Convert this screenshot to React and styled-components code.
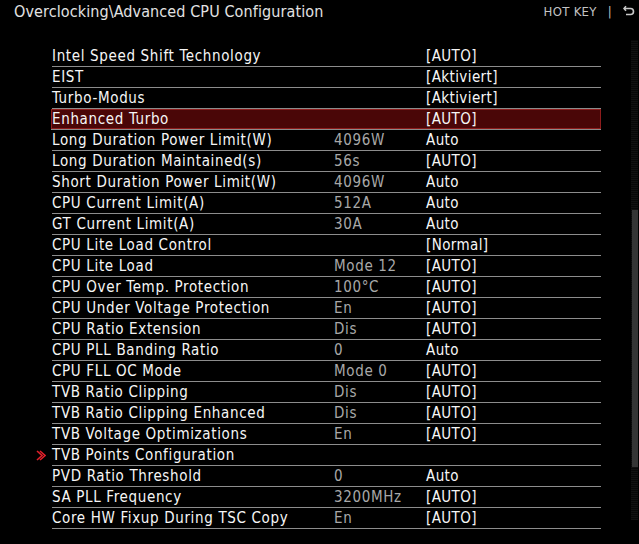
import React from 'react';
import styled, { createGlobalStyle } from 'styled-components';

const GlobalStyle = createGlobalStyle`
  html, body {
    margin: 0;
    padding: 0;
    background: #000;
  }
  body {
    font-family: "DejaVu Sans Condensed", "DejaVu Sans", sans-serif;
    color: #f2f2f2;
  }
`;

const Screen = styled.div`
  width: 639px;
  height: 544px;
  background: #000;
  position: relative;
  overflow: hidden;
`;

const Header = styled.div`
  height: 46px;
  display: flex;
  justify-content: space-between;
  padding: 0 4px 0 14px;
  box-sizing: border-box;
`;

const Title = styled.div`
  font-size: 16px;
  line-height: 24px;
  color: #e2e2e2;
  letter-spacing: 0.1px;
`;

const HotKey = styled.div`
  display: flex;
  align-items: center;
  gap: 11px;
  height: 22px;
  font-size: 13px;
  letter-spacing: 0.3px;
  color: #c4c4c4;
`;

const Body = styled.div`
  display: flex;
`;

const Gutter = styled.div`
  width: 52px;
  flex-shrink: 0;
`;

const List = styled.div`
  width: 549px;
  display: flex;
  flex-direction: column;
`;

const Row = styled.div`
  position: relative;
  display: grid;
  grid-template-columns: 282px 92px 1fr;
  height: 21px;
  align-items: center;
  font-size: 15px;
  letter-spacing: 0.65px;
  box-sizing: border-box;
  border-bottom: 1px solid #8c8c8c;
  background: ${(p) => (p.$active ? '#4a0607' : 'transparent')};
  box-shadow: ${(p) => (p.$active ? 'inset 0 0 0 1px #8e1c1c' : 'none')};
  margin-left: ${(p) => (p.$active ? '-1px' : '0')};
  padding-left: ${(p) => (p.$active ? '1px' : '0')};
`;

const Label = styled.span`
  color: #f6f6f6;
  white-space: nowrap;
`;

const Info = styled.span`
  color: #a8a8a8;
  white-space: nowrap;
`;

const Value = styled.span`
  color: #f6f6f6;
  letter-spacing: 0.4px;
  white-space: nowrap;
`;

const Arrow = styled.svg`
  position: absolute;
  left: -16px;
  top: 5px;
`;

const ScrollTrack = styled.div`
  position: absolute;
  right: 1px;
  top: 40px;
  width: 7px;
  height: 480px;
  background: repeating-linear-gradient(0deg, #111 0 1px, #070707 1px 2px);
`;

const ScrollThumb = styled.div`
  position: absolute;
  left: 1px;
  top: 170px;
  width: 6px;
  height: 257px;
  background: #353535;
`;

const rows = [
  ['Intel Speed Shift Technology', '', '[AUTO]'],
  ['EIST', '', '[Aktiviert]'],
  ['Turbo-Modus', '', '[Aktiviert]'],
  ['Enhanced Turbo', '', '[AUTO]', true],
  ['Long Duration Power Limit(W)', '4096W', 'Auto'],
  ['Long Duration Maintained(s)', '56s', '[AUTO]'],
  ['Short Duration Power Limit(W)', '4096W', 'Auto'],
  ['CPU Current Limit(A)', '512A', 'Auto'],
  ['GT Current Limit(A)', '30A', 'Auto'],
  ['CPU Lite Load Control', '', '[Normal]'],
  ['CPU Lite Load', 'Mode 12', '[AUTO]'],
  ['CPU Over Temp. Protection', '100°C', '[AUTO]'],
  ['CPU Under Voltage Protection', 'En', '[AUTO]'],
  ['CPU Ratio Extension', 'Dis', '[AUTO]'],
  ['CPU PLL Banding Ratio', '0', 'Auto'],
  ['CPU FLL OC Mode', 'Mode 0', '[AUTO]'],
  ['TVB Ratio Clipping', 'Dis', '[AUTO]'],
  ['TVB Ratio Clipping Enhanced', 'Dis', '[AUTO]'],
  ['TVB Voltage Optimizations', 'En', '[AUTO]'],
  ['TVB Points Configuration', '', '', false, true],
  ['PVD Ratio Threshold', '0', 'Auto'],
  ['SA PLL Frequency', '3200MHz', '[AUTO]'],
  ['Core HW Fixup During TSC Copy', 'En', '[AUTO]'],
];

const App = () => {
  return (
    <>
      <GlobalStyle />
      <Screen>
        <Header>
          <Title>Overclocking\Advanced CPU Configuration</Title>
          <HotKey>
            <span>HOT KEY</span>
            <span>|</span>
            <svg width="12" height="12" viewBox="0 0 12 12" fill="none" stroke="#c8c8c8" strokeWidth="1.6">
              <path d="M1 3.5h6.5a3 3 0 0 1 0 6H3" />
              <path d="M3 1.2L1 3.5l2 2.3" />
            </svg>
          </HotKey>
        </Header>
        <Body>
          <Gutter />
          <List>
            {rows.map(([label, info, value, active, sub]) => (
              <Row key={label} $active={active}>
                {sub && (
                  <Arrow width="10" height="11" viewBox="0 0 10 11">
                    <path d="M1 1l5 4.5L1 10M4 1l5 4.5L4 10" stroke="#e0202a" strokeWidth="1.6" fill="none" />
                  </Arrow>
                )}
                <Label>{label}</Label>
                <Info>{info}</Info>
                <Value>{value}</Value>
              </Row>
            ))}
          </List>
        </Body>
        <ScrollTrack>
          <ScrollThumb />
        </ScrollTrack>
      </Screen>
    </>
  );
};

export default App;
